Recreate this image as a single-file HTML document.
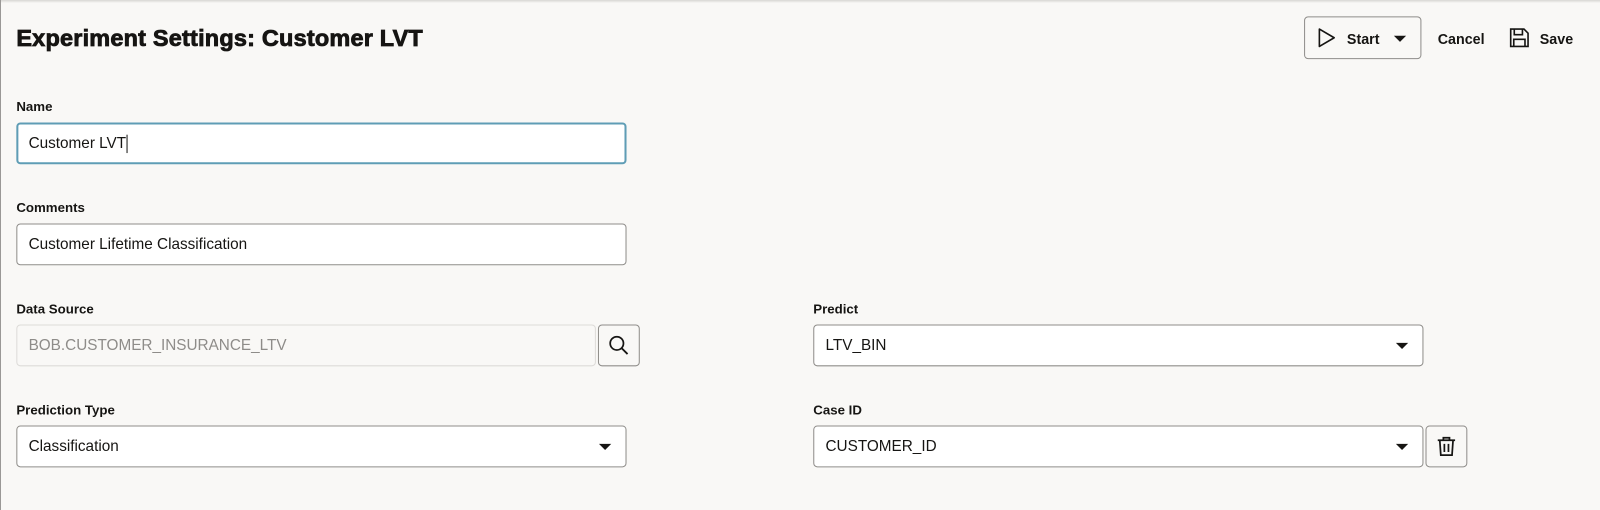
<!DOCTYPE html>
<html><head><style>
body{margin:0;width:1600px;height:510px;background:#f9f8f6;font-family:"Liberation Sans",sans-serif;color:#161513;position:relative;overflow:hidden}
#w{position:absolute;left:0;top:0;width:1568px;height:500px;transform:scale(1.0204);transform-origin:0 0}
.topsh{position:absolute;left:0;top:0;width:1600px;height:3px;background:linear-gradient(#d8d6d3,#f9f8f6)}
.lb{position:absolute;left:0;top:0;width:1px;height:510px;background:#9a9896}
.t{position:absolute;left:16px;top:24px;font-size:23px;font-weight:bold;letter-spacing:0.2px;-webkit-text-stroke:0.8px #161513}
.l{position:absolute;font-size:13px;font-weight:bold}
.i{position:absolute;box-sizing:border-box;height:41px;background:#fff;border:1px solid #8f8d8a;border-radius:4px;font-size:15px;line-height:39px;padding-left:11px}
.dd::after{content:"";position:absolute;right:14px;top:17px;border-left:6px solid transparent;border-right:6px solid transparent;border-top:6px solid #161513}
.b{position:absolute;box-sizing:border-box;height:41px;width:41px;border:1px solid #8f8d8a;border-radius:4px;background:#f9f8f6}
.tb{position:absolute;font-size:14px;font-weight:bold;top:30px}
</style></head><body>
<div class="topsh"></div><div class="lb"></div>
<div id="w">
<div class="t">Experiment Settings: Customer LVT</div>
<div class="b" style="left:1278px;top:16px;width:115px;height:42px"></div>
<svg style="position:absolute;left:1290px;top:27px" width="20" height="20" viewBox="0 0 20 20"><path d="M3 1.5 L17.5 10 L3 18.5 Z" fill="none" stroke="#161513" stroke-width="1.6" stroke-linejoin="round"/></svg>
<div class="tb" style="left:1320px">Start</div>
<div style="position:absolute;left:1366px;top:35px;border-left:6px solid transparent;border-right:6px solid transparent;border-top:6px solid #161513"></div>
<div class="tb" style="left:1409px">Cancel</div>
<svg style="position:absolute;left:1479px;top:27px" width="20" height="20" viewBox="0 0 20 20"><path d="M1.5 1.5 H14.5 L18.5 5.5 V18.5 H1.5 Z M5 1.5 V7 H13 V1.5 M4.5 18.5 V11.5 H15.5 V18.5" fill="none" stroke="#161513" stroke-width="1.6"/></svg>
<div class="tb" style="left:1509px">Save</div>

<div class="l" style="left:16px;top:97px">Name</div>
<div class="i" style="left:16px;top:120px;width:598px;border:2px solid #5f9db5;line-height:37px;padding-left:10px">Customer LVT<span style="display:inline-block;width:1px;height:18px;background:#161513;vertical-align:middle"></span></div>
<div class="l" style="left:16px;top:196px">Comments</div>
<div class="i" style="left:16px;top:219px;width:598px">Customer Lifetime Classification</div>
<div class="l" style="left:16px;top:295px">Data Source</div>
<div class="i" style="left:16px;top:318px;width:568px;background:#f9f8f6;border-color:#dddbd8;color:#8e8c89">BOB.CUSTOMER_INSURANCE_LTV</div>
<div class="b" style="left:586px;top:318px"></div>
<svg style="position:absolute;left:596px;top:328px" width="21" height="21" viewBox="0 0 21 21"><circle cx="8.5" cy="8.5" r="6.5" fill="none" stroke="#161513" stroke-width="1.7"/><path d="M13.3 13.3 L19 19" stroke="#161513" stroke-width="1.8"/></svg>
<div class="l" style="left:797px;top:295px">Predict</div>
<div class="i dd" style="left:797px;top:318px;width:598px">LTV_BIN</div>
<div class="l" style="left:16px;top:394px">Prediction Type</div>
<div class="i dd" style="left:16px;top:417px;width:598px">Classification</div>
<div class="l" style="left:797px;top:394px">Case ID</div>
<div class="i dd" style="left:797px;top:417px;width:598px">CUSTOMER_ID</div>
<div class="b" style="left:1397px;top:417px"></div>
<svg style="position:absolute;left:1407px;top:427px" width="21" height="21" viewBox="0 0 21 21"><path d="M2 4.5 H19 M7.5 4.5 V2 H13.5 V4.5 M4 4.5 L5 19 H16 L17 4.5 M8.5 8 V16 M12.5 8 V16" fill="none" stroke="#161513" stroke-width="1.7"/></svg>
</div>
</body></html>
